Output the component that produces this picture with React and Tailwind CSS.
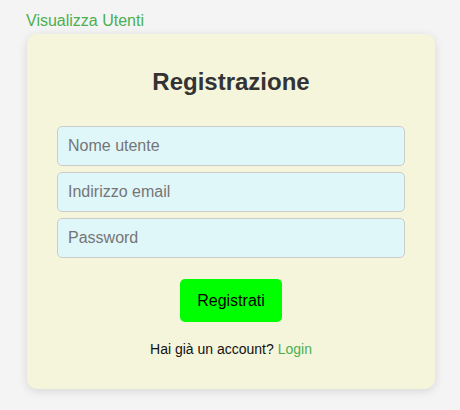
import React from "react";

export default function App() {
  return (
    <div className="min-h-[410px] w-full bg-[#f4f4f4] pt-[12px] font-['Liberation_Sans',Arial,sans-serif]">
      <div className="ml-[27px] w-[408px]">
        <a href="#" className="-ml-px block text-[16px] leading-[18px] text-[#4caf50]">
          Visualizza Utenti
        </a>
        <div className="mt-[4px] rounded-[10px] bg-[#f5f5dc] px-[30px] pt-[34px] pb-[32px] shadow-[0_2px_10px_rgba(0,0,0,0.12)]">
          <h2 className="text-center text-[24px] font-bold leading-[28px] text-[#333]">
            Registrazione
          </h2>
          <div className="mt-[30px] flex flex-col gap-[6px]">
            <input
              type="text"
              placeholder="Nome utente"
              className="h-[40px] w-full rounded-[5px] border border-[#ccc] bg-[#e0f7fa] px-[10px] text-[16px] outline-none placeholder:text-[#757575]"
            />
            <input
              type="email"
              placeholder="Indirizzo email"
              className="h-[40px] w-full rounded-[5px] border border-[#ccc] bg-[#e0f7fa] px-[10px] text-[16px] outline-none placeholder:text-[#757575]"
            />
            <input
              type="password"
              placeholder="Password"
              className="h-[40px] w-full rounded-[5px] border border-[#ccc] bg-[#e0f7fa] px-[10px] text-[16px] outline-none placeholder:text-[#757575]"
            />
          </div>
          <div className="mt-[21px] flex justify-center">
            <button className="flex h-[43px] w-[102px] items-center justify-center rounded-[5px] bg-[#00ff00] text-[16px] text-black">
              Registrati
            </button>
          </div>
          <p className="mt-[19px] text-center text-[14px] leading-[16px] text-[#111]">
            Hai già un account? <a href="#" className="text-[#4caf50]">Login</a>
          </p>
        </div>
      </div>
    </div>
  );
}
